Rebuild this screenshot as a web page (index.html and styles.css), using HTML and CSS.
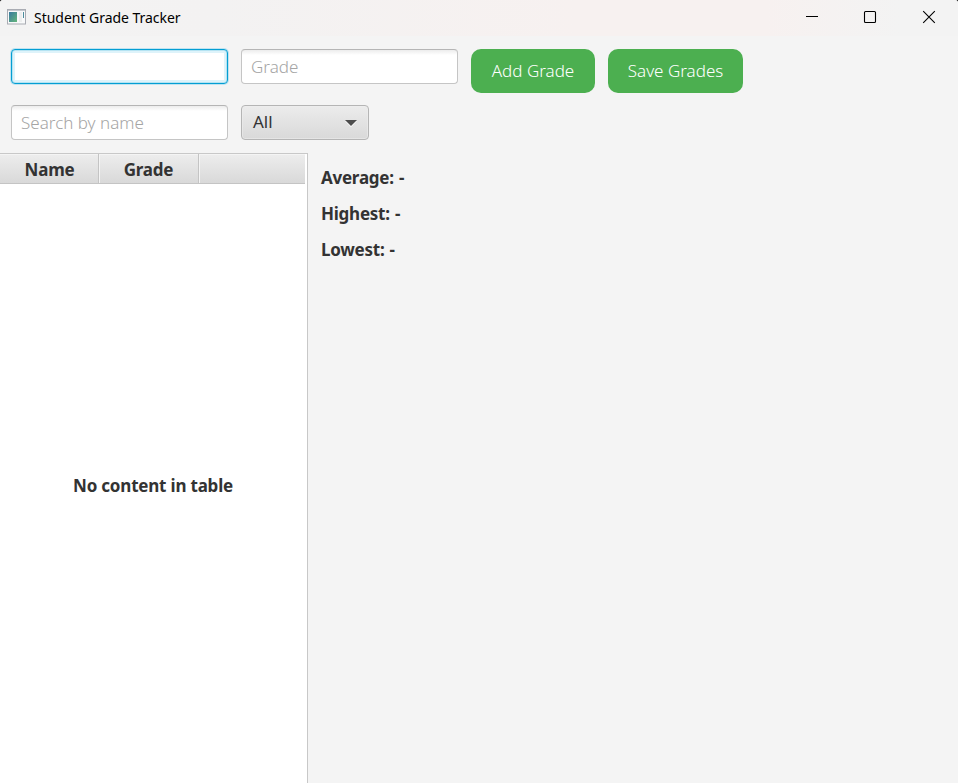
FILE: index.html
```html
<!DOCTYPE html>
<html lang="en">
<head>
<meta charset="utf-8">
<title>Student Grade Tracker</title>
<link rel="stylesheet" href="styles.css">
</head>
<body>
<div class="window">
  <header class="titlebar">
    <svg class="app-icon" width="20" height="16" viewBox="0 0 20 16">
      <defs><linearGradient id="pane" x1="0" y1="0" x2="1" y2="1"><stop offset="0" stop-color="#397aa0"/><stop offset="1" stop-color="#65b67b"/></linearGradient></defs>
      <rect x=".5" y=".5" width="18" height="14.5" fill="#f8f9fa" stroke="#a9acb3"/>
      <path d="M1 1.5h17" stroke="#c6c9cf"/>
      <rect x="2" y="3" width="8" height="10" fill="url(#pane)"/>
      <path d="M12 3h3v10h-3z" fill="#eceeee"/>
      <path d="M16.5 3v6" stroke="#4c8c9b"/>
    </svg>
    <h1 class="title">Student Grade Tracker</h1>
    <div class="controls">
      <svg width="58" height="34" viewBox="0 0 58 34"><path d="M26 16.5h12" stroke="#000" fill="none"/></svg>
      <svg width="58" height="34" viewBox="0 0 58 34"><rect x="26.5" y="11.5" width="11" height="11" rx="1" stroke="#000" stroke-width="1.1" fill="none"/></svg>
      <svg width="58" height="34" viewBox="0 0 58 34"><path d="M26.2 11.2l11.6 11.6M37.8 11.2L26.2 22.8" stroke="#000" stroke-width="1.1" fill="none"/></svg>
    </div>
  </header>
  <form class="toolbar">
    <input class="field focused" type="text" aria-label="Name">
    <input class="field" type="text" placeholder="Grade">
    <button class="btn btn-add" type="button">Add Grade</button>
    <button class="btn btn-save" type="button">Save Grades</button>
  </form>
  <div class="filters">
    <input class="field" type="text" placeholder="Search by name">
    <button class="combo" type="button"><span>All</span><svg width="12" height="7" viewBox="0 0 12 7"><path d="M0 1h12L6 7z" fill="#fff"/><path d="M0 0h12L6 6z" fill="#4d4d4d"/></svg></button>
  </div>
  <main class="content">
    <section class="table">
      <div class="thead">
        <div class="th">Name</div>
        <div class="th">Grade</div>
        <div class="th"></div>
      </div>
      <div class="empty"><span>No content in table</span></div>
    </section>
    <aside class="stats">
      <p>Average: -</p>
      <p>Highest: -</p>
      <p>Lowest: -</p>
    </aside>
  </main>
</div>
</body>
</html>
```
FILE: styles.css
```css
* { box-sizing: border-box; }
body {
  margin: 0;
  background: #111;
  font-family: "Noto Sans", "Open Sans", sans-serif;
  font-size: 17px;
  color: #333;
}
.window {
  display: flex;
  flex-direction: column;
  height: 783px;
  overflow: hidden;
  border-radius: 3px 3px 0 0;
  background: #f4f4f4;
}
.titlebar {
  display: flex;
  flex: none;
  height: 36px;
  padding-left: 7px;
  background: linear-gradient(90deg, #f3f3f3 0%, #f3f2f2 22%, #f7f1f0 60%, #f7f1f0 80%, #f3f3f3 94%);
}
.app-icon { margin-top: 9px; }
.title {
  margin: 0 0 0 7px;
  font-size: 14px;
  line-height: 35px;
  font-weight: 400;
  letter-spacing: -0.03px;
  color: #000;
  white-space: nowrap;
}
.controls { display: flex; margin-left: auto; padding-right: 3px; }
.controls svg:last-child { margin-left: 1px; }
.toolbar {
  display: flex;
  align-items: flex-start;
  gap: 13px;
  margin: 0;
  padding: 13px 11px 12px;
}
.filters { display: flex; gap: 13px; padding: 0 11px 13px; }
.field {
  width: 217px;
  height: 35px;
  padding: 0 9px 1px;
  border: 1px solid #c5c5c5;
  border-top-color: #b5b5b5;
  border-radius: 4px;
  outline: 0;
  background: linear-gradient(#ececec, #fff 5px);
  font: 350 17px "Noto Sans", "Open Sans", sans-serif;
}
.field::placeholder { color: #a5a5a5; opacity: 1; }
.focused {
  border-color: #039ed3;
  background: #fff;
  box-shadow: 0 0 0 1px #c0e3f0, inset 0 0 0 1px #b5e3f2, inset 0 0 0 3px #def3fa;
}
.btn {
  height: 44px;
  padding: 0 0 2px;
  border: 0;
  border-radius: 10px;
  background: #4caf50;
  color: #fff;
  font: 350 17px "Noto Sans", "Open Sans", sans-serif;
}
.btn-add { width: 124px; }
.btn-save { width: 135px; }
.combo {
  display: flex;
  align-items: center;
  justify-content: space-between;
  width: 128px;
  height: 35px;
  padding: 0 11px;
  border: 1px solid #b5b5b5;
  border-radius: 4px;
  background: linear-gradient(#ececec, #d9d9d9);
  box-shadow: inset 0 0 0 1px #eee8;
  color: #333;
  font: 400 17px "Noto Sans", "Open Sans", sans-serif;
}
.combo span { margin-top: -2px; }
.combo svg { margin-top: 2px; }
.content { display: flex; flex: 1; min-height: 0; }
.table {
  display: flex;
  flex-direction: column;
  width: 308px;
  border-top: 1px solid #c8c8c8;
  border-right: 1px solid #c8c8c8;
  background: #fff;
  font-weight: 700;
  letter-spacing: -0.2px;
}
.thead {
  display: grid;
  grid-template-columns: 99px 100px 106px;
  grid-template-rows: 30px;
  flex: none;
  height: 30px;
}
.th {
  border-right: 1px solid #c4c4c4;
  border-bottom: 1px solid #c4c4c4;
  background: linear-gradient(#ededed, #d9d9d9);
  box-shadow: inset 1px 1px 0 #f4f4f4;
  text-align: center;
  line-height: 32px;
}
.th:first-child { padding-left: 1px; box-shadow: inset 0 1px 0 #f4f4f4; }
.th:last-child { border-right: 0; }
.empty {
  display: flex;
  flex: 1;
  align-items: center;
  justify-content: center;
  padding: 4px 1px 0 0;
}
.stats {
  padding: 7px 13px;
  font-weight: 700;
  letter-spacing: -0.25px;
  word-spacing: 1px;
}
.stats p { margin: 0; line-height: 36px; }
```
